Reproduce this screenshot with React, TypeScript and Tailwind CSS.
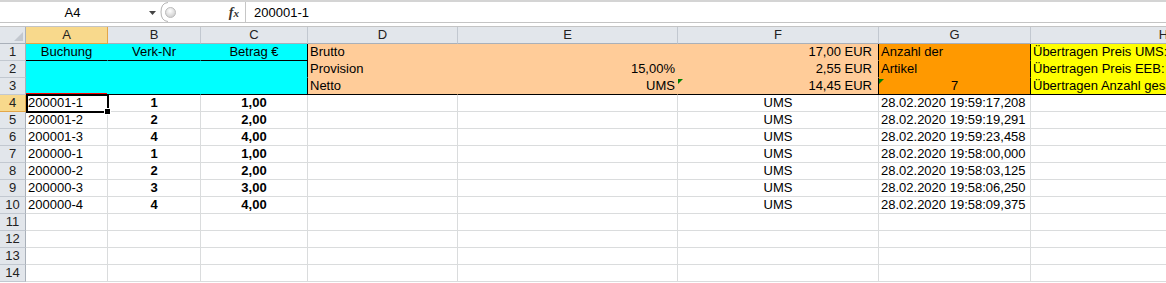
import React from "react";

type CellDef = {
  text?: string;
  bg: string;
  br: string;
  bb: string;
  align?: "l" | "c" | "r" | "rr";
  bold?: boolean;
  tri?: boolean;
};

const colW = [
  "w-[82px]",
  "w-[93px]",
  "w-[107px]",
  "w-[150px]",
  "w-[220px]",
  "w-[201px]",
  "w-[152px]",
  "w-[266px]",
];
const letters = ["A", "B", "C", "D", "E", "F", "G", "H"];

const dataRows: [string, string, string, string][] = [
  ["200001-1", "1", "1,00", "28.02.2020 19:59:17,208"],
  ["200001-2", "2", "2,00", "28.02.2020 19:59:19,291"],
  ["200001-3", "4", "4,00", "28.02.2020 19:59:23,458"],
  ["200000-1", "1", "1,00", "28.02.2020 19:58:00,000"],
  ["200000-2", "2", "2,00", "28.02.2020 19:58:03,125"],
  ["200000-3", "3", "3,00", "28.02.2020 19:58:06,250"],
  ["200000-4", "4", "4,00", "28.02.2020 19:58:09,375"],
];

function getCell(r: number, c: number): CellDef {
  const def: CellDef = { bg: "bg-white", br: "border-r-[#dadcdd]", bb: "border-b-[#dadcdd]" };
  if (r <= 3) {
    const last = r === 3;
    if (c <= 2) {
      const texts = ["Buchung", "Verk-Nr", "Betrag €"];
      return {
        text: r === 1 ? texts[c] : undefined,
        bg: "bg-[#00ffff]",
        br: c === 2 ? "border-r-black" : "border-r-[#00ffff]",
        bb: r === 2 ? "border-b-[#00ffff]" : "border-b-black",
        align: "c",
      };
    }
    if (c === 3) {
      return {
        text: ["Brutto", "Provision", "Netto"][r - 1],
        bg: "bg-[#ffcc99]",
        br: "border-r-[#ffcc99]",
        bb: last ? "border-b-black" : "border-b-[#ffcc99]",
        align: "l",
      };
    }
    if (c === 4) {
      return {
        text: ["", "15,00%", "UMS"][r - 1],
        bg: "bg-[#ffcc99]",
        br: "border-r-[#ffcc99]",
        bb: last ? "border-b-black" : "border-b-[#ffcc99]",
        align: "r",
      };
    }
    if (c === 5) {
      return {
        text: ["17,00 EUR", "2,55 EUR", "14,45 EUR"][r - 1],
        bg: "bg-[#ffcc99]",
        br: "border-r-black",
        bb: last ? "border-b-black" : "border-b-[#ffcc99]",
        align: "rr",
        tri: last,
      };
    }
    if (c === 6) {
      return {
        text: ["Anzahl der", "Artikel", "7"][r - 1],
        bg: "bg-[#ff9900]",
        br: "border-r-black",
        bb: last ? "border-b-black" : "border-b-[#ff9900]",
        align: last ? "c" : "l",
        tri: last,
      };
    }
    return {
      text: ["Übertragen Preis UMS:", "Übertragen Preis EEB:", "Übertragen Anzahl gesamt:"][r - 1],
      bg: "bg-[#ffff00]",
      br: "border-r-black",
      bb: last ? "border-b-black" : "border-b-[#ffff00]",
      align: "l",
    };
  }
  const d = dataRows[r - 4];
  if (!d) return def;
  if (c === 0) return { ...def, text: d[0], align: "l" };
  if (c === 1) return { ...def, text: d[1], align: "c", bold: true };
  if (c === 2) return { ...def, text: d[2], align: "c", bold: true };
  if (c === 5) return { ...def, text: "UMS", align: "c" };
  if (c === 6) return { ...def, text: d[3], align: "l" };
  return def;
}

const alignCls = {
  l: "justify-start pl-[2px]",
  c: "justify-center",
  r: "justify-end pr-[2px]",
  rr: "justify-end pr-[6px]",
};

function Triangle() {
  return (
    <svg className="absolute left-0 top-[1px]" width="6" height="6" viewBox="0 0 6 6">
      <polygon points="0,0 5,0 0,5" fill="#008000" />
    </svg>
  );
}

export default function App() {
  const rows = Array.from({ length: 14 }, (_, i) => i + 1);
  return (
    <div className="relative w-[1166px] h-[283px] overflow-hidden bg-white text-[13px] leading-[16px] text-black font-['Liberation_Sans',Arial,sans-serif]">
      {/* Formula bar */}
      <div className="flex h-[22px] border-t-2 border-[#d4d4d4] bg-white">
        <div className="w-[145px] shrink-0 text-center pt-[3px]">A4</div>
        <div className="w-[15px] shrink-0 flex items-center pl-[4px] pt-[1px]">
          <svg width="7" height="4" viewBox="0 0 7 4">
            <polygon points="0,0 7,0 3.5,4" fill="#444" />
          </svg>
        </div>
        <div className="w-[85px] shrink-0 flex items-center">
          <svg width="22" height="20" viewBox="0 0 22 20" className="shrink-0">
            <path d="M8 0.5 Q1 1 1 10 Q1 19 8 19.5" fill="none" stroke="#b4b4b4" strokeWidth="1" />
            <defs>
              <radialGradient id="knob" cx="0.45" cy="0.35" r="0.7">
                <stop offset="0" stopColor="#ffffff" />
                <stop offset="1" stopColor="#c9c9c9" />
              </radialGradient>
            </defs>
            <circle cx="10.5" cy="10.5" r="5" fill="url(#knob)" stroke="#bdbdbd" strokeWidth="1" />
          </svg>
          <div className="flex-1" />
          <span className="font-['Liberation_Serif',serif] italic font-bold text-[14px] text-[#333] pr-[6px] pt-[1px]">
            f<span className="text-[11px]">x</span>
          </span>
        </div>
        <div className="w-[1px] shrink-0 bg-[#c6c6c6]" />
        <div className="pl-[8px] pt-[3px]">200001-1</div>
      </div>
      <div className="h-[1px] bg-[#c4c4c4]" />
      <div className="h-[3px] bg-white" />
      <div className="h-[1px] bg-[#c4c4c4]" />

      {/* Column headers */}
      <div className="flex h-[17px] bg-[#e2e6eb] text-[#222]">
        <div className="w-[26px] shrink-0 h-[17px] border-r border-b border-[#a9b0b9] flex items-end justify-end">
          <svg width="9" height="9" viewBox="0 0 9 9" className="mb-[2px] mr-[2px]">
            <polygon points="9,0 9,9 0,9" fill="#c3c8cf" />
          </svg>
        </div>
        {letters.map((l, i) => (
          <div
            key={l}
            className={`${colW[i]} shrink-0 h-[17px] flex items-center justify-center border-b ${
              i === 0
                ? "bg-[#f8d98c] border-r border-r-[#e3a648] border-b-[#e3a648]"
                : "border-r border-r-[#c2c8d0] border-b-[#a9b0b9]"
            }`}
          >
            {l}
          </div>
        ))}
      </div>

      {/* Rows */}
      {rows.map((r) => (
        <div key={r} className="flex h-[17px]">
          <div
            className={`w-[26px] shrink-0 h-[17px] border-r border-b flex items-end justify-center text-[#222] ${
              r === 4
                ? "bg-[#f8d98c] border-r-[#e3a648] border-b-[#e3a648]"
                : "bg-[#e2e6eb] border-r-[#a9b0b9] border-b-[#c2c8d0]"
            }`}
          >
            {r}
          </div>
          {letters.map((_, c) => {
            const cell = getCell(r, c);
            return (
              <div
                key={c}
                className={`${colW[c]} shrink-0 relative h-[17px] border-r border-b ${cell.bg} ${cell.br} ${cell.bb} flex items-end overflow-hidden whitespace-nowrap ${
                  alignCls[cell.align ?? "l"]
                } ${cell.bold ? "font-bold" : ""}`}
              >
                {cell.tri && <Triangle />}
                {r === 3 && c === 0 && (
                  <div className="absolute left-0 right-0 bottom-0 h-[1px] bg-[#ff0000]" />
                )}
                {cell.text}
              </div>
            );
          })}
        </div>
      ))}

      {/* Selection A4 */}
      <div className="absolute left-[26px] top-[94px] w-[83px] h-[19px] border-2 border-black pointer-events-none" />
      <div className="absolute left-[104px] top-[108px] w-[7px] h-[7px] bg-black border border-white pointer-events-none" />
    </div>
  );
}
